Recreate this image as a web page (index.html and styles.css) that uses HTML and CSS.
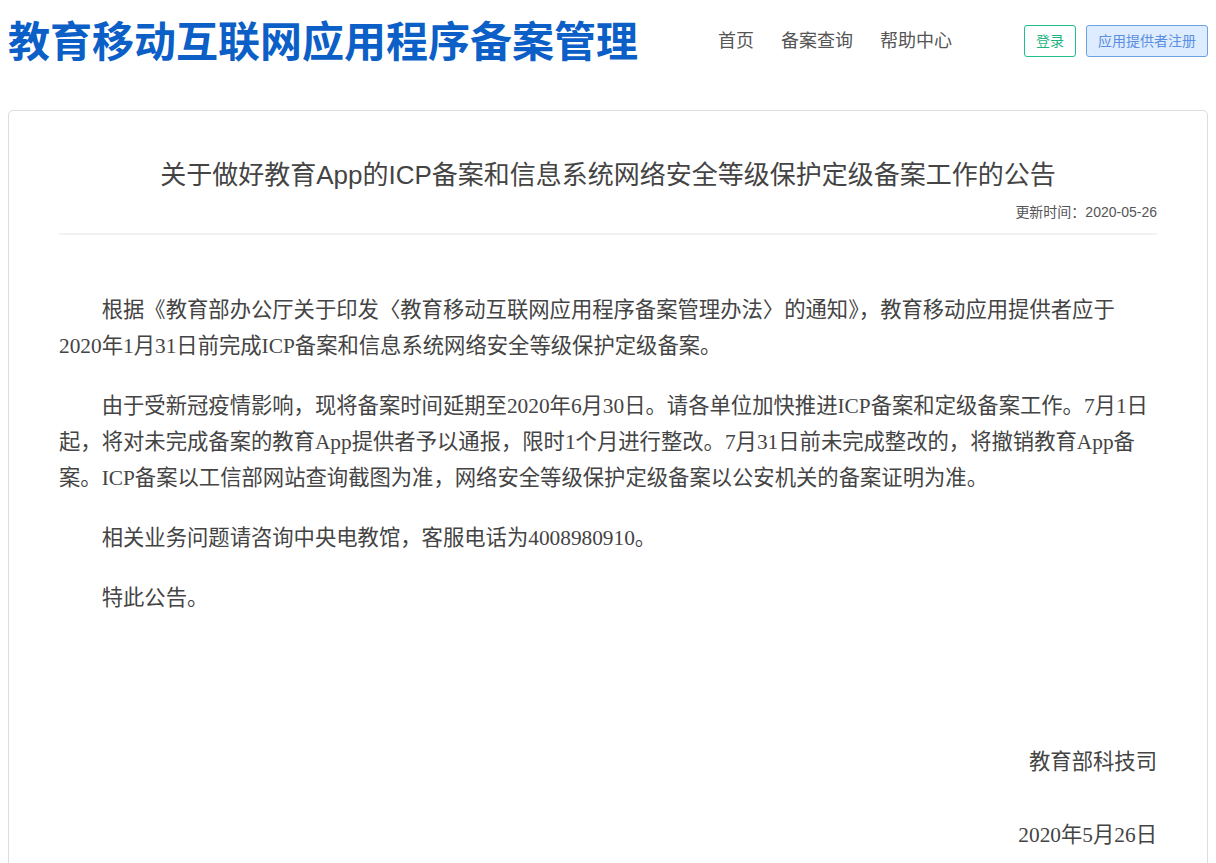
FILE: index.html
```html
<!DOCTYPE html>
<html lang="zh-CN">
<head>
    <meta charset="UTF-8">
    <meta name="viewport" content="width=device-width, initial-scale=1.0">
    <title>教育移动互联网应用程序备案管理</title>
    <link rel="stylesheet" href="styles.css">
</head>
<body>
    <div class="header">
        <div class="logo">教育移动互联网应用程序备案管理</div>
        <div class="nav">
            <a href="#">首页</a>
            <a href="#">备案查询</a>
            <a href="#">帮助中心</a>
        </div>
        <div class="actions">
            <a class="btn btn-login" href="#">登录</a>
            <a class="btn btn-register" href="#">应用提供者注册</a>
        </div>
    </div>

    <div class="notice">
        <h1 class="notice-title">关于做好教育App的ICP备案和信息系统网络安全等级保护定级备案工作的公告</h1>
        <div class="notice-time">更新时间：2020-05-26</div>
        <div class="notice-body">
            <p>根据《教育部办公厅关于印发〈教育移动互联网应用程序备案管理办法〉的通知》，教育移动应用提供者应于2020年1月31日前完成ICP备案和信息系统网络安全等级保护定级备案。</p>
            <p>由于受新冠疫情影响，现将备案时间延期至2020年6月30日。请各单位加快推进ICP备案和定级备案工作。7月1日起，将对未完成备案的教育App提供者予以通报，限时1个月进行整改。7月31日前未完成整改的，将撤销教育App备案。ICP备案以工信部网站查询截图为准，网络安全等级保护定级备案以公安机关的备案证明为准。</p>
            <p>相关业务问题请咨询中央电教馆，客服电话为4008980910。</p>
            <p>特此公告。</p>
            <p class="sign">教育部科技司</p>
            <p class="sign date">2020年5月26日</p>
        </div>
    </div>
</body>
</html>
```

FILE: styles.css
```css
body {
    margin: 8px;
    font-family: "Liberation Sans", "Noto Sans CJK SC", sans-serif;
    color: #444;
    background: #fff;
}
a {
    text-decoration: none;
}
.header {
    display: flex;
    align-items: center;
    height: 66px;
}
.logo {
    font-family: "Noto Sans CJK SC", sans-serif;
    font-size: 42px;
    font-weight: 700;
    color: #0b5fc6;
    line-height: 1;
    margin-bottom: 5px;
}
.nav {
    display: flex;
    gap: 27px;
    margin-left: 80px;
    margin-bottom: 4px;
}
.nav a {
    font-size: 18px;
    color: #555;
}
.actions {
    display: flex;
    gap: 10px;
    margin-left: auto;
}
.btn {
    display: inline-block;
    height: 30px;
    line-height: 30px;
    padding: 0 11px;
    font-size: 14px;
    border-radius: 3px;
}
.btn-login {
    border: 1px solid #1fc08e;
    color: #1fb37f;
}
.btn-register {
    border: 1px solid #6ea0e4;
    background: #ddecfe;
    color: #5b8ee0;
}
.notice {
    margin-top: 36px;
    border: 1px solid #ddd;
    border-radius: 5px;
    padding: 44px 50px 40px;
}
.notice-title {
    margin: 0;
    font-size: 26px;
    font-weight: normal;
    text-align: center;
    line-height: 40px;
    color: #444;
}
.notice-time {
    margin-top: 6px;
    text-align: right;
    font-size: 14px;
    color: #555;
    padding-bottom: 12px;
    border-bottom: 2px solid #f1f1f1;
}
.notice-body {
    padding-top: 57px;
    font-family: "Liberation Serif", "Noto Sans CJK SC", serif;
    font-size: 21.33px;
    color: #444;
}
.notice-body p {
    margin: 0 0 24px;
    line-height: 36px;
    text-indent: 2em;
}
.notice-body .sign {
    text-indent: 0;
    text-align: right;
    margin: 128px 0 0;
}
.notice-body .date {
    margin-top: 37px;
}
```
